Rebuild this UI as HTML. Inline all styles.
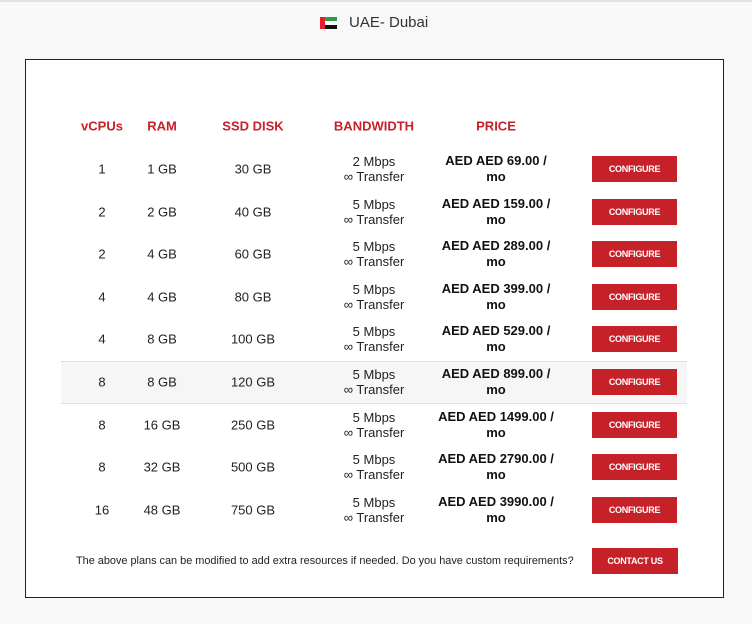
<!DOCTYPE html>
<html><head><meta charset="utf-8"><style>
*{margin:0;padding:0;box-sizing:border-box}
body{width:752px;height:624px;background:#f8f8f8;font-family:"Liberation Sans",sans-serif;position:relative;overflow:hidden;color:#222}
.top{position:absolute;left:0;top:0;width:752px;height:2px;background:#e2e2e2}
.title{position:absolute;top:14px;left:320px;font-size:15px;color:#333;display:flex;align-items:center}
.flag{width:17px;height:12px;margin-right:12px;position:relative;background:linear-gradient(#2e9a48 0 33%,#fff 33% 66%,#111 66%)}
.flag:before{content:"";position:absolute;left:0;top:0;width:5px;height:12px;background:#e3202a}
.box{position:absolute;left:25px;top:59px;width:699px;height:539px;background:#fff;border:1px solid #222}
.c{position:absolute;text-align:center;transform:translate(-50%,-50%);white-space:nowrap}
.h{color:#c8202a;font-weight:bold;font-size:13px}
.v{font-size:13px;color:#222}
.bw{font-size:13px;line-height:15px;color:#222}
.p{font-size:13px;font-weight:bold;line-height:16px;color:#111}
.btn{position:absolute;background:#c62128;color:#fff;font-weight:bold;font-size:9px;display:flex;align-items:center;justify-content:center;letter-spacing:-0.3px}
.hl{position:absolute;left:61px;width:626px;top:361px;height:43px;background:#f6f6f6;border-top:1px solid #e0e0e0;border-bottom:1px solid #e0e0e0}
.ft{position:absolute;left:76px;top:555px;font-size:10.9px;color:#222;white-space:nowrap}
</style></head><body>
<div class="top"></div>
<div class="title"><div class="flag"></div>UAE- Dubai</div>
<div class="box"></div>
<div class="hl"></div>
<div class="c h" style="left:102px;top:126px">vCPUs</div>
<div class="c h" style="left:162px;top:126px">RAM</div>
<div class="c h" style="left:253px;top:126px">SSD DISK</div>
<div class="c h" style="left:374px;top:126px">BANDWIDTH</div>
<div class="c h" style="left:496px;top:126px">PRICE</div>
<div id="rows"></div>
<div class="ft">The above plans can be modified to add extra resources if needed. Do you have custom requirements?</div>
<div class="btn" style="left:592px;top:548px;width:86px;height:26px">CONTACT US</div>
<script>
var d=[[1,"1 GB","30 GB","2","69.00"],[2,"2 GB","40 GB","5","159.00"],[2,"4 GB","60 GB","5","289.00"],[4,"4 GB","80 GB","5","399.00"],[4,"8 GB","100 GB","5","529.00"],[8,"8 GB","120 GB","5","899.00"],[8,"16 GB","250 GB","5","1499.00"],[8,"32 GB","500 GB","5","2790.00"],[16,"48 GB","750 GB","5","3990.00"]];
var h="";d.forEach(function(r,i){var y=169+i*42.6;
h+='<div class="c v" style="left:102px;top:'+y+'px">'+r[0]+'</div>';
h+='<div class="c v" style="left:162px;top:'+y+'px">'+r[1]+'</div>';
h+='<div class="c v" style="left:253px;top:'+y+'px">'+r[2]+'</div>';
h+='<div class="c bw" style="left:374px;top:'+y+'px">'+r[3]+' Mbps<br>∞ Transfer</div>';
h+='<div class="c p" style="left:496px;top:'+y+'px">AED AED '+r[4]+' /<br>mo</div>';
h+='<div class="btn" style="left:592px;top:'+(y-13)+'px;width:85px;height:26px">CONFIGURE</div>';});
document.getElementById("rows").innerHTML=h;
</script>
</body></html>
